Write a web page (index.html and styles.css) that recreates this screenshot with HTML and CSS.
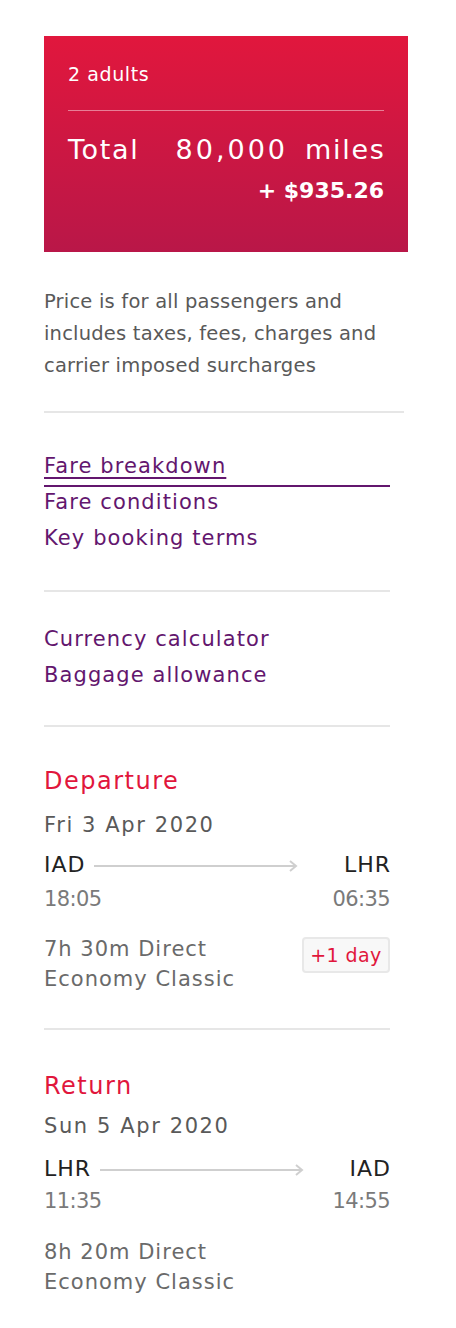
FILE: index.html
```html
<!DOCTYPE html>
<html lang="en">
<head>
<meta charset="utf-8">
<title>Fare summary</title>
<link rel="stylesheet" href="styles.css">
</head>
<body>
<main class="page">
  <section class="card">
    <div class="pax">2 adults</div>
    <div class="card-rule"></div>
    <div class="total-row">
      <span class="total-label">Total</span>
      <span class="total-miles"><span class="miles-num">80,000</span><span class="miles-unit">miles</span></span>
    </div>
    <div class="total-cash">+ $935.26</div>
  </section>

  <p class="note">Price is for all passengers and includes taxes, fees, charges and carrier imposed surcharges</p>
  <div class="rule rule-wide"></div>

  <nav class="links links-first">
    <a class="link link-active" href="#">Fare breakdown</a>
    <a class="link" href="#">Fare conditions</a>
    <a class="link" href="#">Key booking terms</a>
  </nav>
  <div class="rule"></div>

  <nav class="links links-second">
    <a class="link" href="#">Currency calculator</a>
    <a class="link" href="#">Baggage allowance</a>
  </nav>
  <div class="rule"></div>

  <section class="flight flight-out">
    <h2 class="flight-title">Departure</h2>
    <div class="flight-date">Fri 3 Apr 2020</div>
    <div class="route">
      <span class="code">IAD</span>
      <svg class="arrow" width="206" height="14" viewBox="0 0 206 14"><line x1="0" y1="6" x2="202" y2="6" stroke="#cfcfcf" stroke-width="2"/><path d="M196 1 L202 6 L196 11" fill="none" stroke="#cfcfcf" stroke-width="2"/></svg>
      <span class="code code-dest">LHR</span>
    </div>
    <div class="times"><span>18:05</span><span>06:35</span></div>
    <div class="info-row">
      <div class="info">
        <div>7h 30m Direct</div>
        <div>Economy Classic</div>
      </div>
      <span class="badge">+1 day</span>
    </div>
  </section>
  <div class="rule"></div>

  <section class="flight flight-back">
    <h2 class="flight-title">Return</h2>
    <div class="flight-date">Sun 5 Apr 2020</div>
    <div class="route">
      <span class="code">LHR</span>
      <svg class="arrow" width="206" height="14" viewBox="0 0 206 14"><line x1="0" y1="6" x2="202" y2="6" stroke="#cfcfcf" stroke-width="2"/><path d="M196 1 L202 6 L196 11" fill="none" stroke="#cfcfcf" stroke-width="2"/></svg>
      <span class="code code-dest">IAD</span>
    </div>
    <div class="times"><span>11:35</span><span>14:55</span></div>
    <div class="info-row">
      <div class="info">
        <div>8h 20m Direct</div>
        <div>Economy Classic</div>
      </div>
    </div>
  </section>
</main>
</body>
</html>
```

FILE: styles.css
```css
* { box-sizing: border-box; }

body {
  margin: 0;
  background: #ffffff;
  font-family: "DejaVu Sans", "Open Sans", "Liberation Sans", sans-serif;
  color: #555555;
}

.page {
  padding: 36px 0 40px 44px;
  width: 456px;
}

.card {
  width: 364px;
  height: 216px;
  padding: 24px 24px 0 24px;
  background: linear-gradient(180deg, #e1173d 0%, #b91748 100%);
  color: #ffffff;
}

.pax {
  font-size: 19px;
  line-height: 28px;
  letter-spacing: 0.6px;
}

.card-rule {
  height: 1px;
  background: rgba(255, 255, 255, 0.45);
  margin-top: 22px;
}

.total-row {
  display: flex;
  justify-content: space-between;
  align-items: baseline;
  margin-top: 21px;
  font-size: 27px;
  line-height: 36px;
  letter-spacing: 1.7px;
}

.total-miles {
  display: flex;
  gap: 17px;
  margin-right: -1.5px;
}

.miles-num {
  letter-spacing: 3px;
}

.total-cash {
  margin-top: 6px;
  text-align: right;
  font-size: 22px;
  line-height: 34px;
  font-weight: 600;
}

.note {
  margin: 34px 0 0 0;
  width: 360px;
  font-size: 19.5px;
  line-height: 32px;
  color: #595959;
  letter-spacing: 0.2px;
}

.rule {
  height: 2px;
  width: 346px;
  background: #e6e6e6;
}

.rule-wide {
  width: 360px;
  margin-top: 29px;
}

.links {
  display: flex;
  flex-direction: column;
  width: 346px;
}

.links-first {
  padding: 35px 0 34px 0;
}

.links-second {
  padding: 29px 0 32px 0;
}

.link {
  font-size: 21px;
  line-height: 36px;
  color: #63166e;
  text-decoration: none;
  letter-spacing: 1.1px;
}

.link-active {
  position: relative;
  text-decoration: underline;
  text-decoration-thickness: 1.5px;
  text-underline-offset: 4px;
}

.link-active::after {
  content: "";
  position: absolute;
  left: 0;
  right: 0;
  bottom: -3px;
  height: 2px;
  background: #63166e;
}

.flight {
  width: 346px;
}

.flight-out {
  padding: 38px 0 34px 0;
}

.flight-back {
  padding: 40px 0 0 0;
}

.flight-title {
  margin: 0;
  font-size: 24px;
  line-height: 32px;
  font-weight: 400;
  color: #e1163c;
  letter-spacing: 1.5px;
}

.flight-date {
  margin-top: 12px;
  font-size: 21px;
  line-height: 32px;
  color: #595959;
  letter-spacing: 1.6px;
}

.flight-back .flight-date {
  margin-top: 8px;
}

.route {
  display: flex;
  align-items: center;
  margin-top: 10px;
  height: 28px;
}

.flight-back .route {
  margin-top: 13px;
}

.code {
  font-size: 22px;
  line-height: 28px;
  color: #222222;
  letter-spacing: 1px;
}

.code-dest {
  margin-left: auto;
  margin-right: -1px;
}

.arrow {
  margin-left: 9px;
  margin-top: 4px;
  flex: none;
}

.times {
  display: flex;
  justify-content: space-between;
  margin-top: 6px;
  font-size: 21px;
  line-height: 28px;
  color: #7a7a7a;
  letter-spacing: -0.6px;
}

.flight-back .times {
  margin-top: 4px;
}

.info-row {
  display: flex;
  justify-content: space-between;
  align-items: flex-start;
  margin-top: 21px;
}

.flight-back .info-row {
  margin-top: 22px;
}

.info {
  font-size: 21px;
  line-height: 30px;
  color: #6a6a6a;
  letter-spacing: 1px;
}

.badge {
  margin-top: 3px;
  width: 88px;
  height: 36px;
  display: flex;
  align-items: center;
  justify-content: center;
  border: 2px solid #e8e8e8;
  border-radius: 4px;
  background: #f8f8f8;
  color: #e1163c;
  font-size: 19px;
  letter-spacing: 0.4px;
}
```
